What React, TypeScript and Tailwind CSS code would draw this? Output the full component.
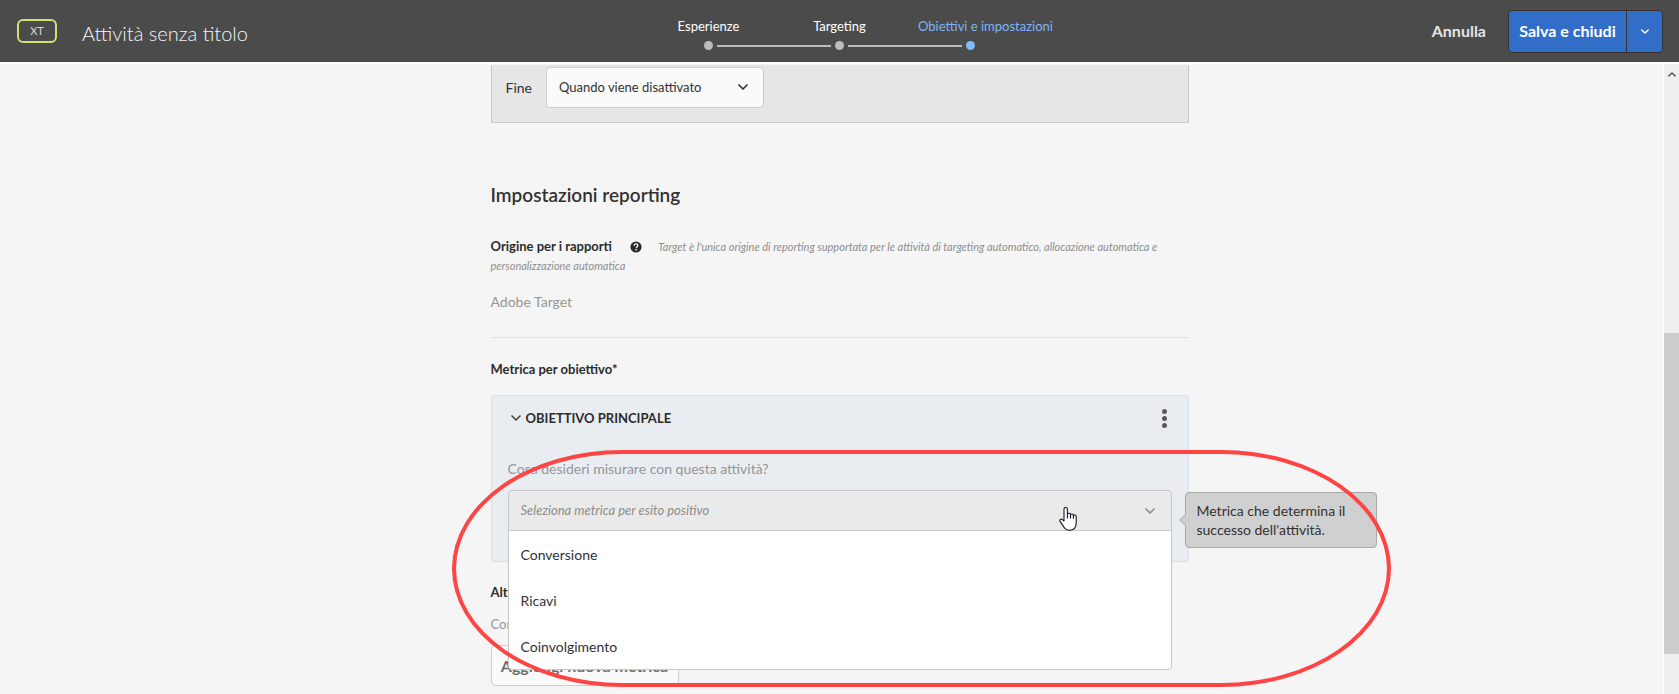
import { useState } from "react";

const STEPS = [
  { label: "Esperienze", current: false },
  { label: "Targeting", current: false },
  { label: "Obiettivi e impostazioni", current: true },
];

const METRICS = ["Conversione", "Ricavi", "Coinvolgimento"];

function Chevron({ className, up = false, small = false }: { className?: string; up?: boolean; small?: boolean }) {
  return (
    <svg
      viewBox="0 0 10 6"
      width={small ? 8 : 10}
      height={small ? 5 : 6}
      fill="none"
      stroke="currentColor"
      strokeWidth="1.7"
      strokeLinecap="round"
      strokeLinejoin="round"
      aria-hidden="true"
      className={className}
    >
      <path d={up ? "M1 5l4-4 4 4" : "M1 1l4 4 4-4"} />
    </svg>
  );
}

function HelpIcon() {
  return (
    <svg viewBox="0 0 12 12" width="12" height="12" aria-hidden="true">
      <circle cx="6" cy="6" r="5.6" fill="#2c2c2c" />
      <path
        d="M4.2 4.7c0-1.1.8-1.8 1.9-1.8s1.8.6 1.8 1.5c0 1.3-1.6 1.3-1.6 2.5"
        fill="none"
        stroke="#f5f5f5"
        strokeWidth="1.3"
      />
      <circle cx="6.2" cy="8.7" r=".85" fill="#f5f5f5" />
    </svg>
  );
}

function HandPointer() {
  return (
    <svg viewBox="0 0 18 24" width="18" height="24" aria-hidden="true">
      <path
        d="M5 14V2.2a1.7 1.7 0 0 1 3.4 0V7c.3-1 2.9-1 3.1.6.5-1 2.7-.8 2.9.8.6-.8 2.8-.6 2.8 1.4v6c0 4.7-2.4 7.4-6.7 7.4-3 0-4.6-1.2-6-3.8L1 14.4c-.8-1.7 1-3 2.4-1.8L5 14z"
        fill="#fff"
        stroke="#14142b"
        strokeWidth="1.1"
        strokeLinejoin="round"
      />
      <path d="M8.4 7v4M11.5 7.6V11M14.4 8.4v2.8" fill="none" stroke="#14142b" strokeWidth="1.1" strokeLinecap="round" />
    </svg>
  );
}

function Stepper() {
  return (
    <ol className="flex pt-4">
      {STEPS.map((step, i) => (
        <li key={step.label} className="flex w-[131px] flex-col items-center" aria-current={step.current ? "step" : undefined}>
          <span className={`text-[13px] leading-5 whitespace-nowrap ${step.current ? "pl-[30px] text-[#7db4f7]" : "text-white"}`}>
            {step.label}
          </span>
          <span className="mt-[5px] flex w-full items-center gap-1">
            <span className={`h-0.5 flex-1 ${i === 0 ? "bg-transparent" : "bg-[#bcbcbc]"}`} />
            <span className={`size-[9px] rounded-full ${step.current ? "bg-[#82b9ff]" : "bg-[#bcbcbc]"}`} />
            <span className={`h-0.5 flex-1 ${i === STEPS.length - 1 ? "bg-transparent" : "bg-[#bcbcbc]"}`} />
          </span>
        </li>
      ))}
    </ol>
  );
}

function TopBar() {
  return (
    <header className="grid h-16 shrink-0 grid-cols-[1fr_auto_1fr] border-b-2 border-white bg-[#4b4b4b]">
      <div className="flex items-center gap-[25px] pl-[17px]">
        <span className="flex h-6 w-10 items-center justify-center rounded-md border-2 border-[#d5df75] text-[11px] text-[#d8d8d8]">
          XT
        </span>
        <h1 className="pt-1 text-[20px] leading-6 font-light text-[#f5f5f5]">Attività senza titolo</h1>
      </div>
      <Stepper />
      <div className="flex items-center justify-end gap-[22px] pr-4">
        <button type="button" className="text-[16px] font-bold text-[#e4e4e4]">
          Annulla
        </button>
        <div className="flex h-[43px] overflow-hidden rounded border border-[#323232] bg-[#326ec8] text-white">
          <button type="button" className="w-[117px] text-[16px] font-bold">
            Salva e chiudi
          </button>
          <button
            type="button"
            aria-label="Altre opzioni di salvataggio"
            className="flex w-9 items-center justify-center border-l border-[#323232]"
          >
            <Chevron small />
          </button>
        </div>
      </div>
    </header>
  );
}

function MetricSelect() {
  const [open, setOpen] = useState(true);
  const [value, setValue] = useState("");
  return (
    <div className="relative mt-[11px]">
      <button
        type="button"
        id="metric"
        aria-haspopup="listbox"
        aria-expanded={open}
        aria-labelledby="metric-label"
        aria-describedby="metric-tip"
        onClick={() => setOpen(!open)}
        className="flex h-[41px] w-full items-center justify-between rounded-t border border-[#c8c8c8] bg-[#eaeaea] pr-4 pl-3 text-[#8d8d8d]"
      >
        <span className="text-[13px] italic">{value || "Seleziona metrica per esito positivo"}</span>
        <Chevron />
      </button>
      {open && (
        <ul
          role="listbox"
          aria-labelledby="metric-label"
          className="absolute inset-x-0 top-full z-10 -mt-px rounded-b border border-[#c8c8c8] bg-white"
        >
          {METRICS.map((m) => (
            <li
              key={m}
              role="option"
              aria-selected={m === value}
              onClick={() => {
                setValue(m);
                setOpen(false);
              }}
              className="flex h-[46px] items-center px-3 text-[14px] text-[#323232]"
            >
              {m}
            </li>
          ))}
        </ul>
      )}
      <div
        id="metric-tip"
        role="tooltip"
        className="absolute top-0.5 left-full z-10 ml-[13px] w-48 rounded border border-[#a8a8a8] bg-[#d0d0d0] px-[11px] py-2 text-[14px] leading-[19px] text-[#323232]"
      >
        <span className="absolute top-1/2 -left-[5px] size-2 -translate-y-1/2 rotate-45 border-b border-l border-[#b4b4b4] bg-[#d0d0d0]" />
        Metrica che determina il successo dell'attività.
      </div>
      <div className="pointer-events-none absolute top-[17px] right-[95px] z-20">
        <HandPointer />
      </div>
    </div>
  );
}

function GoalSection() {
  return (
    <div className="relative mt-4">
      <section className="rounded border border-[#d3dfee] bg-[#e9edf2] px-4 pt-3 pb-[30px]">
        <div className="flex items-center justify-between">
          <h3>
            <button type="button" className="flex items-center gap-[5px] pl-[3px] text-[13px] leading-5 font-bold text-[#2c2c2c]">
              <Chevron className="text-[#4b4b4b]" />
              OBIETTIVO PRINCIPALE
            </button>
          </h3>
          <button type="button" aria-label="Azioni obiettivo" className="flex flex-col items-center gap-0.5 pt-px pr-[5px]">
            <span className="size-[5px] rounded-full bg-[#5a5a5a]" />
            <span className="size-[5px] rounded-full bg-[#5a5a5a]" />
            <span className="size-[5px] rounded-full bg-[#5a5a5a]" />
          </button>
        </div>
        <p id="metric-label" className="mt-[31px] text-[14px] leading-5 text-[#959595]">
          Cosa desideri misurare con questa attività?
        </p>
        <MetricSelect />
      </section>
      <div className="pointer-events-none absolute top-[55px] -right-[202px] -left-[39px] z-20 h-[237px] rounded-[170px/50%] border-4 border-[#ff4444]" />
    </div>
  );
}

function ScrollTrack() {
  return (
    <div aria-hidden="true" className="grid w-4 grid-rows-[269fr_321fr_40fr] justify-self-end border-l border-white bg-[#efefef]">
      <div className="flex justify-center pt-2 text-[#505050]">
        <Chevron up small />
      </div>
      <div className="bg-[#cdcdcd]" />
    </div>
  );
}

export default function App() {
  return (
    <div className="flex h-screen flex-col overflow-hidden bg-[#f5f5f5] font-['Lato','Noto_Sans',sans-serif] text-[#323232]">
      <TopBar />
      <div className="grid min-h-0 flex-1 grid-cols-[1fr_minmax(0,698px)_1fr]">
        <main className="relative z-10 col-start-2 pt-px">
          <div className="flex items-center gap-3.5 border border-t-0 border-[#c8c8c8] bg-[#e6e6e6] pt-0.5 pb-3.5 pl-3.5">
            <label htmlFor="end" className="text-[14px]">
              Fine
            </label>
            <div className="relative">
              <select
                id="end"
                className="h-[41px] w-[218px] appearance-none rounded border border-[#cdcdcd] bg-[#fafafa] pl-3 text-[13px] text-[#323232]"
              >
                <option>Quando viene disattivato</option>
              </select>
              <Chevron className="pointer-events-none absolute top-[17px] right-4" />
            </div>
          </div>

          <h2 className="mt-[60px] text-[19px] leading-6 font-semibold">Impostazioni reporting</h2>

          <p className="mt-[30px] text-[11px] leading-[19px] text-[#8e8e8e] italic">
            <span className="text-[13px] font-bold text-[#2c2c2c] not-italic">Origine per i rapporti</span>
            <button type="button" aria-label="Aiuto" className="mr-4 ml-[18px] align-[-2px]">
              <HelpIcon />
            </button>
            Target è l'unica origine di reporting supportata per le attività di targeting automatico, allocazione automatica e
            personalizzazione automatica
          </p>
          <p className="mt-[17px] text-[14px] leading-5 text-[#959595]">Adobe Target</p>
          <hr className="mt-[25px] border-[#e1e1e1]" />

          <h3 className="mt-[21px] text-[13px] leading-5 font-bold text-[#2c2c2c]">Metrica per obiettivo*</h3>
          <GoalSection />

          <h3 className="mt-5 text-[13px] leading-5 font-bold text-[#2c2c2c]">Altre metriche</h3>
          <p className="mt-3 text-[13px] leading-5 text-[#959595]">Configura altre metriche</p>
          <button
            type="button"
            className="mt-[11px] h-[41px] w-[188px] rounded border border-[#cdcdcd] bg-[#fafafa] text-[16px] font-bold text-[#6e6e6e]"
          >
            Aggiungi nuova metrica
          </button>
        </main>
        <ScrollTrack />
      </div>
    </div>
  );
}
